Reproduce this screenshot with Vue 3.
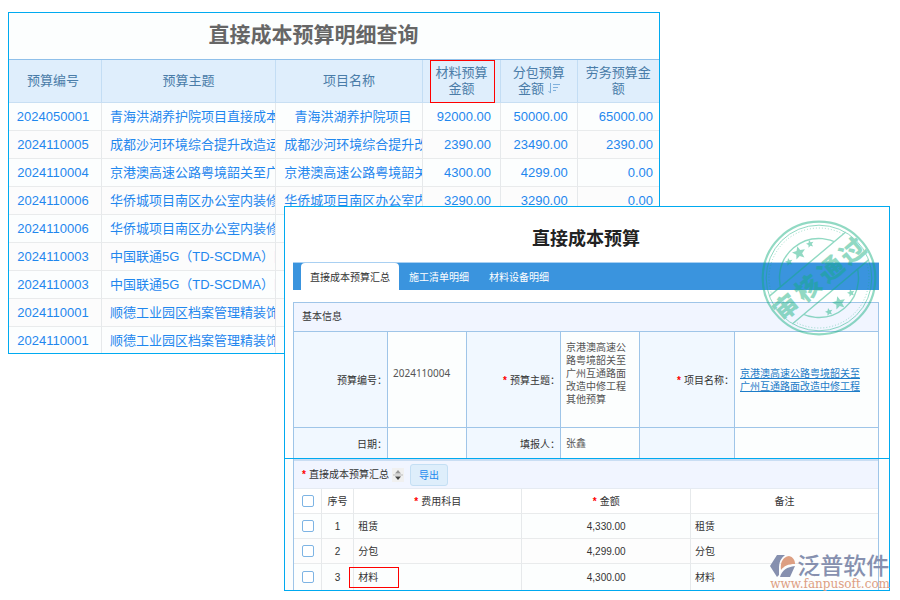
<script setup>
import { ref } from 'vue'

const queryRows = [
  { code: '2024050001', topic: '青海洪湖养护院项目直接成本', project: '青海洪湖养护院项目', material: '92000.00', sub: '50000.00', labor: '65000.00' },
  { code: '2024110005', topic: '成都沙河环境综合提升改造运', project: '成都沙河环境综合提升改', material: '2390.00', sub: '23490.00', labor: '2390.00' },
  { code: '2024110004', topic: '京港澳高速公路粤境韶关至广', project: '京港澳高速公路粤境韶关', material: '4300.00', sub: '4299.00', labor: '0.00' },
  { code: '2024110006', topic: '华侨城项目南区办公室内装修', project: '华侨城项目南区办公室内', material: '3290.00', sub: '3290.00', labor: '0.00' },
  { code: '2024110006', topic: '华侨城项目南区办公室内装修' },
  { code: '2024110003', topic: '中国联通5G（TD-SCDMA）网' },
  { code: '2024110003', topic: '中国联通5G（TD-SCDMA）网' },
  { code: '2024110001', topic: '顺德工业园区档案管理精装饰' },
  { code: '2024110001', topic: '顺德工业园区档案管理精装饰' },
]

const tabs = ['直接成本预算汇总', '施工清单明细', '材料设备明细']
const activeTab = ref(0)

const costRows = ref([
  { subject: '租赁', amount: '4,330.00', note: '租赁', checked: false },
  { subject: '分包', amount: '4,299.00', note: '分包', checked: false },
  { subject: '材料', amount: '4,300.00', note: '材料', checked: false, marked: true },
])
const allChecked = ref(false)
function toggleAll() {
  costRows.value.forEach((r) => (r.checked = allChecked.value))
}

const stampChars = [
  { t: '审', x: -44 },
  { t: '核', x: -15 },
  { t: '通', x: 15 },
  { t: '过', x: 43 },
]
const stars = [
  { x: 30, y: 44, s: 4 },
  { x: 40, y: 35, s: 7 },
  { x: 51, y: 26, s: 4 },
  { x: 70, y: 94, s: 4 },
  { x: 80, y: 85, s: 7 },
  { x: 92, y: 75, s: 4 },
]
function starPoints({ x, y, s }) {
  return Array.from({ length: 10 }, (_, i) => {
    const r = i % 2 ? s * 0.45 : s
    const a = -Math.PI / 2 - 0.25 + (i * Math.PI) / 5
    return `${(x + r * Math.cos(a)).toFixed(2)},${(y + r * Math.sin(a)).toFixed(2)}`
  }).join(' ')
}
</script>

<template>
  <main class="page">
    <section class="panel query">
      <h1 class="query-title">直接成本预算明细查询</h1>
      <table class="query-table">
        <colgroup>
          <col class="q1" /><col class="q2" /><col class="q3" /><col class="q4" /><col class="q5" /><col class="q6" />
        </colgroup>
        <thead>
          <tr>
            <th class="code">预算编号</th>
            <th>预算主题</th>
            <th>项目名称</th>
            <th class="marked">材料预算<br />金额</th>
            <th>
              分包预算<br />金额
              <svg class="sort" viewBox="0 0 12 11" aria-hidden="true">
                <path d="M2.5 0V10M0.5 8L2.5 10.2M5 1.5H12M5 4.5H10M5 7.5H8" fill="none" stroke="#7fb0dc" />
              </svg>
            </th>
            <th>劳务预算金额</th>
          </tr>
        </thead>
        <tbody>
          <tr v-for="(row, i) in queryRows" :key="i">
            <td class="code"><a href="#">{{ row.code }}</a></td>
            <td class="name"><a href="#">{{ row.topic }}</a></td>
            <td class="name"><a v-if="row.project" href="#">{{ row.project }}</a></td>
            <td class="num">{{ row.material }}</td>
            <td class="num">{{ row.sub }}</td>
            <td class="num last">{{ row.labor }}</td>
          </tr>
        </tbody>
      </table>
    </section>

    <section class="panel detail">
      <div class="upper">
        <h2 class="detail-title">直接成本预算</h2>
        <nav class="tabs">
          <button
            v-for="(tab, i) in tabs"
            :key="tab"
            type="button"
            class="tab"
            :class="{ active: i === activeTab }"
            @click="activeTab = i"
          >{{ tab }}</button>
        </nav>
        <div class="info">
          <h3 class="info-title">基本信息</h3>
          <div class="info-grid">
            <div class="key">预算编号：</div>
            <div class="val raised">2024110004</div>
            <div class="key"><i>*</i>预算主题：</div>
            <div class="val raised">京港澳高速公路粤境韶关至广州互通路面改造中修工程其他预算</div>
            <div class="key"><i>*</i>项目名称：</div>
            <div class="val project"><a href="#">京港澳高速公路粤境韶关至广州互通路面改造中修工程</a></div>
            <div class="key">日期：</div>
            <div class="val"></div>
            <div class="key">填报人：</div>
            <div class="val">张鑫</div>
            <div class="key"></div>
            <div class="val"></div>
          </div>
        </div>
      </div>

      <div class="lower">
        <div class="summary">
          <div class="summary-bar">
            <span class="summary-name"><i>*</i>直接成本预算汇总</span>
            <button type="button" class="updown" aria-label="排序">
              <svg viewBox="0 0 12 14" aria-hidden="true">
                <path d="M6 2L9 5.5H3Z" fill="#999" />
                <path d="M6 12L9 8.5H3Z" fill="#444" />
                <path d="M1 7H11" stroke="#bbb" />
              </svg>
            </button>
            <button type="button" class="export">导出</button>
          </div>
          <table class="cost-table">
            <colgroup>
              <col class="c1" /><col class="c2" /><col class="c3" /><col class="c4" /><col class="c5" />
            </colgroup>
            <thead>
              <tr>
                <th><input v-model="allChecked" type="checkbox" aria-label="全选" @change="toggleAll" /></th>
                <th>序号</th>
                <th><i>*</i>费用科目</th>
                <th><i>*</i>金额</th>
                <th>备注</th>
              </tr>
            </thead>
            <tbody>
              <tr v-for="(row, i) in costRows" :key="i">
                <td><input v-model="row.checked" type="checkbox" :aria-label="row.subject" /></td>
                <td>{{ i + 1 }}</td>
                <td class="text" :class="{ marked: row.marked }">{{ row.subject }}</td>
                <td>{{ row.amount }}</td>
                <td class="text">{{ row.note }}</td>
              </tr>
            </tbody>
          </table>
        </div>
      </div>

      <svg class="stamp" viewBox="0 0 120 120" aria-hidden="true">
        <defs>
          <clipPath id="outside-band">
            <path d="M-60 -60H60V-18H-60ZM-60 18H60V60H-60Z" />
          </clipPath>
        </defs>
        <g opacity="0.46" fill="#11ae7d" stroke="none">
          <g fill="none" stroke="#11ae7d">
            <circle cx="60" cy="60" r="56.3" stroke-width="2.2" />
            <circle cx="60" cy="60" r="52.8" stroke-width="1" />
            <g transform="translate(60 60) rotate(-40)">
              <g clip-path="url(#outside-band)">
                <circle r="50" stroke-width="0.8" stroke-dasharray="1 2" />
                <circle r="39.5" stroke-width="1.4" />
              </g>
              <path d="M-50 -18H50M-50 18H50" stroke-width="1.4" />
            </g>
          </g>
          <g transform="translate(60 60) rotate(-40)">
            <text v-for="c in stampChars" :key="c.t" class="stamp-text" :x="c.x" y="10">{{ c.t }}</text>
          </g>
          <polygon v-for="(s, i) in stars" :key="i" :points="starPoints(s)" />
        </g>
      </svg>

      <div class="brand">
        <div class="brand-top">
          <svg class="brand-logo" viewBox="0 0 27 24" aria-hidden="true">
            <path d="M7 1H15C11 4 9 8 9 13V21L7 23L0 12Z" fill="#808bab" />
            <path d="M11 16C10 8 13 3 19 2C23 3 25 6 25 10C18 10 14 12 11 16Z" fill="#dc9a7c" />
            <path d="M10 23C12 16 17 13 25 12L20 23Z" fill="#808bab" />
          </svg>
          <span class="brand-name">泛普软件</span>
        </div>
        <div class="brand-url">www.fanpusoft.com</div>
      </div>
    </section>
  </main>
</template>

<style>
body {
  background: #fff;
}
</style>

<style scoped>
.page {
  display: grid;
  grid-template-columns: 276fr 376fr 230fr;
  grid-template-rows: 194px 148px auto;
  padding: 12px 10px 9px 8px;
  font-family: "Liberation Sans", "Noto Sans CJK SC", sans-serif;
}
h1,
h2,
h3 {
  margin: 0;
}
button {
  font-family: inherit;
  padding: 0;
  border: 0;
}
i {
  color: #f00;
  font-style: normal;
  font-weight: 700;
  margin-right: 3px;
}
.panel {
  box-sizing: border-box;
  border: 1px solid #00aaf0;
  background: #fcfefe;
  min-width: 0;
}
table {
  width: 100%;
  table-layout: fixed;
  border-collapse: separate;
  border-spacing: 0;
}
th,
td {
  box-sizing: border-box;
  padding: 0;
  font-weight: 400;
  text-align: center;
}

.query {
  grid-area: 1 / 1 / 3 / 3;
  overflow: hidden;
}
.query-title {
  box-sizing: border-box;
  height: 47px;
  padding-right: 41px;
  border-bottom: 1px solid #8fc0ea;
  color: #666;
  font-size: 21px;
  line-height: 44px;
  text-align: center;
}
.q1 { width: 14.3%; }
.q2 { width: 26.8%; }
.q3 { width: 22.6%; }
.q4 { width: 12%; }
.q5 { width: 11.8%; }
.q6 { width: 12.5%; }
.query-table {
  font-size: 13px;
  line-height: 16px;
}
.query-table th {
  height: 43px;
  padding: 0 7px;
  background: #dfeefc;
  border-right: 1px solid #c3ddf4;
  border-bottom: 1px solid #c8dff3;
  color: #4a7ca8;
}
.query-table th.code,
.query-table td.code {
  padding: 0 4px 0 0;
}
.query-table td {
  height: 28px;
  border-right: 1px solid #e6e9eb;
  border-bottom: 1px solid #e9ebec;
  color: #1f87ee;
  white-space: nowrap;
  overflow: hidden;
}
.query-table tr:nth-child(even) td {
  background: #fcfcfc;
}
.query-table a {
  color: inherit;
  text-decoration: none;
}
.query-table td.name {
  padding-left: 8px;
}
.query-table td.num {
  padding-right: 9px;
  text-align: right;
}
.query-table td.last {
  padding-right: 6px;
}
.query-table th:last-child,
.query-table td:last-child {
  border-right: 0;
}
.sort {
  width: 12px;
  height: 11px;
  vertical-align: -1px;
}
.marked {
  position: relative;
}
.marked::after {
  content: "";
  position: absolute;
  box-sizing: border-box;
  border: 1px solid #f00;
}
th.marked::after {
  inset: 0 5px -1px 7px;
}
td.marked::after {
  left: -5px;
  top: 3px;
  width: 50px;
  height: 21px;
}

.detail {
  grid-area: 2 / 2 / 4 / 4;
  position: relative;
  color: #333;
  font-size: 10px;
  line-height: 13px;
}
.upper {
  padding: 0 10px 0 8px;
  background: #fff;
}
.detail-title {
  color: #222;
  font-size: 18px;
  line-height: 24px;
  padding: 20px 0 11px;
  text-align: center;
}
.tabs {
  display: flex;
  height: 27px;
  padding-left: 8px;
  border-top: 1px solid #a9d0f2;
  background: #3a94de;
}
.tab {
  padding: 0 10px;
  background: none;
  color: #fff;
  font-size: 10px;
}
.tab.active {
  padding: 0 9px;
  border-radius: 4px 4px 0 0;
  background: #fff;
  color: #333;
}
.info {
  margin-top: 12px;
  border: 1px solid #9fc5e8;
  border-bottom: 0;
  background: #fcfefe;
}
.info-title {
  padding: 7px 8px;
  border-bottom: 1px solid #9fc5e8;
  background: #f1f5ff;
  font-size: 10px;
  font-weight: 400;
  line-height: 14px;
}
.info-grid {
  display: grid;
  grid-template-columns: 94fr 79fr 94fr 79fr 95fr 143fr;
  grid-template-rows: 96px 30px;
}
.key,
.val {
  display: flex;
  align-items: center;
  box-sizing: border-box;
  min-width: 0;
  border-right: 1px solid #9fc5e8;
}
.key {
  justify-content: flex-end;
  padding-top: 2px;
  background: #f1f8ff;
}
.val {
  padding: 0 12px 0 5px;
  color: #555;
  font-family: "Noto Sans", "Noto Sans CJK SC", sans-serif;
}
.val.raised {
  padding-bottom: 12px;
}
.val:nth-child(6n) {
  border-right: 0;
}
.info-grid > :nth-child(-n + 6) {
  border-bottom: 1px solid #9fc5e8;
}
.project a {
  color: #1c7cc8;
}

.lower {
  padding: 0 10px 0 8px;
  border-top: 1px solid #00aaf0;
}
.summary {
  border: 1px solid #9fc5e8;
  border-width: 0 1px;
}
.summary-bar {
  display: flex;
  align-items: center;
  height: 27px;
  padding-left: 8px;
  border-top: 2px solid #c9ddf3;
  border-bottom: 1px solid #e6ebf2;
  background: #f1f5ff;
}
.updown {
  width: 12px;
  height: 14px;
  margin-left: 3px;
  background: #f0f0f0;
}
.updown svg {
  display: block;
}
.export {
  box-sizing: border-box;
  height: 22px;
  margin-left: 6px;
  padding: 0 8px;
  border: 1px solid #c4dff4;
  border-radius: 3px;
  background: #deeefb;
  color: #2389ee;
  font-size: 10px;
}
.c1 { width: 4.8%; }
.c2 { width: 5.5%; }
.c3 { width: 28.8%; }
.c4 { width: 28.9%; }
.c5 { width: 32%; }
.cost-table th,
.cost-table td {
  height: 25px;
  border-right: 1px solid #e6e9eb;
  border-bottom: 1px solid #e9ebec;
}
.cost-table th {
  background: #fff;
}
.cost-table th:last-child,
.cost-table td:last-child {
  border-right: 0;
}
.cost-table tbody tr:last-child td {
  height: 26px;
  border-bottom: 0;
}
.cost-table tbody tr:nth-child(even) td {
  background: #fdfdfd;
}
.cost-table td.text {
  padding-left: 4px;
  text-align: left;
}
input[type="checkbox"] {
  appearance: none;
  display: block;
  box-sizing: border-box;
  width: 12px;
  height: 12px;
  margin: 0 auto;
  border: 1px solid #7db4e4;
  border-radius: 2px;
  background: #fff;
}
input[type="checkbox"]:checked {
  background: #3a94de;
}

.stamp {
  position: absolute;
  top: 11px;
  right: 10px;
  width: 120px;
  height: 120px;
}
.stamp-text {
  font-family: "Noto Sans CJK SC", sans-serif;
  font-size: 25px;
  font-weight: 900;
  text-anchor: middle;
}
.brand {
  position: absolute;
  right: -1px;
  bottom: 0;
  opacity: 0.95;
}
.brand-top {
  display: flex;
  align-items: center;
  height: 24px;
}
.brand-logo {
  width: 27px;
  height: 24px;
}
.brand-name {
  color: #808bab;
  font-size: 23px;
  font-weight: 500;
  line-height: 24px;
}
.brand-url {
  color: #dc9a7c;
  font-family: "DejaVu Serif", serif;
  font-size: 12px;
  line-height: 12px;
  text-align: right;
}
</style>
